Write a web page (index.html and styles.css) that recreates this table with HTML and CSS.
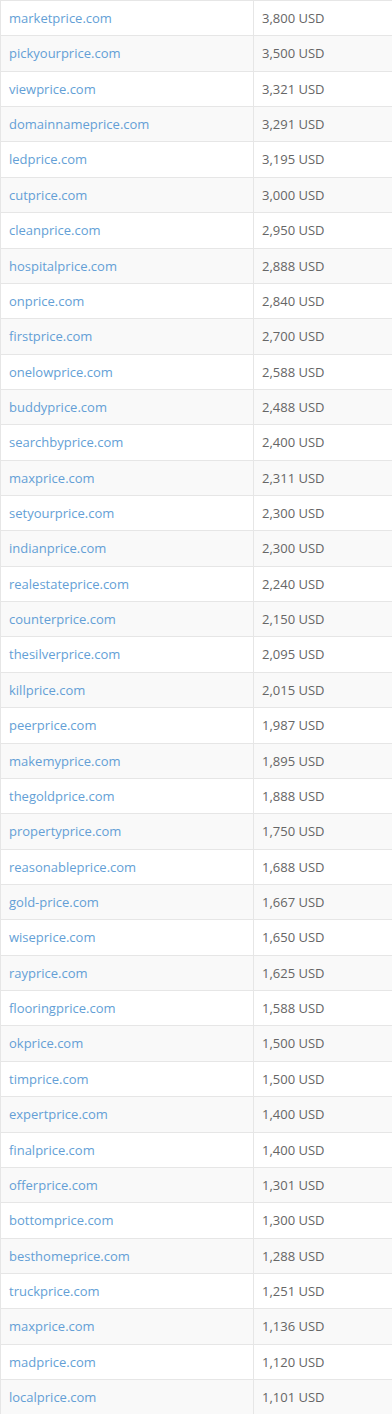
FILE: index.html
```html
<!DOCTYPE html>
<html>
<head>
<meta charset="utf-8">
<link rel="stylesheet" href="styles.css">
</head>
<body>
<table class="prices">
<tbody>
<tr><td class="domain"><a href="#">marketprice.com</a></td><td class="price">3,800 USD</td></tr>
<tr><td class="domain"><a href="#">pickyourprice.com</a></td><td class="price">3,500 USD</td></tr>
<tr><td class="domain"><a href="#">viewprice.com</a></td><td class="price">3,321 USD</td></tr>
<tr><td class="domain"><a href="#">domainnameprice.com</a></td><td class="price">3,291 USD</td></tr>
<tr><td class="domain"><a href="#">ledprice.com</a></td><td class="price">3,195 USD</td></tr>
<tr><td class="domain"><a href="#">cutprice.com</a></td><td class="price">3,000 USD</td></tr>
<tr><td class="domain"><a href="#">cleanprice.com</a></td><td class="price">2,950 USD</td></tr>
<tr><td class="domain"><a href="#">hospitalprice.com</a></td><td class="price">2,888 USD</td></tr>
<tr><td class="domain"><a href="#">onprice.com</a></td><td class="price">2,840 USD</td></tr>
<tr><td class="domain"><a href="#">firstprice.com</a></td><td class="price">2,700 USD</td></tr>
<tr><td class="domain"><a href="#">onelowprice.com</a></td><td class="price">2,588 USD</td></tr>
<tr><td class="domain"><a href="#">buddyprice.com</a></td><td class="price">2,488 USD</td></tr>
<tr><td class="domain"><a href="#">searchbyprice.com</a></td><td class="price">2,400 USD</td></tr>
<tr><td class="domain"><a href="#">maxprice.com</a></td><td class="price">2,311 USD</td></tr>
<tr><td class="domain"><a href="#">setyourprice.com</a></td><td class="price">2,300 USD</td></tr>
<tr><td class="domain"><a href="#">indianprice.com</a></td><td class="price">2,300 USD</td></tr>
<tr><td class="domain"><a href="#">realestateprice.com</a></td><td class="price">2,240 USD</td></tr>
<tr><td class="domain"><a href="#">counterprice.com</a></td><td class="price">2,150 USD</td></tr>
<tr><td class="domain"><a href="#">thesilverprice.com</a></td><td class="price">2,095 USD</td></tr>
<tr><td class="domain"><a href="#">killprice.com</a></td><td class="price">2,015 USD</td></tr>
<tr><td class="domain"><a href="#">peerprice.com</a></td><td class="price">1,987 USD</td></tr>
<tr><td class="domain"><a href="#">makemyprice.com</a></td><td class="price">1,895 USD</td></tr>
<tr><td class="domain"><a href="#">thegoldprice.com</a></td><td class="price">1,888 USD</td></tr>
<tr><td class="domain"><a href="#">propertyprice.com</a></td><td class="price">1,750 USD</td></tr>
<tr><td class="domain"><a href="#">reasonableprice.com</a></td><td class="price">1,688 USD</td></tr>
<tr><td class="domain"><a href="#">gold-price.com</a></td><td class="price">1,667 USD</td></tr>
<tr><td class="domain"><a href="#">wiseprice.com</a></td><td class="price">1,650 USD</td></tr>
<tr><td class="domain"><a href="#">rayprice.com</a></td><td class="price">1,625 USD</td></tr>
<tr><td class="domain"><a href="#">flooringprice.com</a></td><td class="price">1,588 USD</td></tr>
<tr><td class="domain"><a href="#">okprice.com</a></td><td class="price">1,500 USD</td></tr>
<tr><td class="domain"><a href="#">timprice.com</a></td><td class="price">1,500 USD</td></tr>
<tr><td class="domain"><a href="#">expertprice.com</a></td><td class="price">1,400 USD</td></tr>
<tr><td class="domain"><a href="#">finalprice.com</a></td><td class="price">1,400 USD</td></tr>
<tr><td class="domain"><a href="#">offerprice.com</a></td><td class="price">1,301 USD</td></tr>
<tr><td class="domain"><a href="#">bottomprice.com</a></td><td class="price">1,300 USD</td></tr>
<tr><td class="domain"><a href="#">besthomeprice.com</a></td><td class="price">1,288 USD</td></tr>
<tr><td class="domain"><a href="#">truckprice.com</a></td><td class="price">1,251 USD</td></tr>
<tr><td class="domain"><a href="#">maxprice.com</a></td><td class="price">1,136 USD</td></tr>
<tr><td class="domain"><a href="#">madprice.com</a></td><td class="price">1,120 USD</td></tr>
<tr><td class="domain"><a href="#">localprice.com</a></td><td class="price">1,101 USD</td></tr>
</tbody>
</table>
</body>
</html>
```

FILE: styles.css
```css
html, body {
  margin: 0;
  padding: 0;
  background: #ffffff;
}

body {
  font-family: "Open Sans", "Liberation Sans", sans-serif;
  font-size: 13px;
}

.prices {
  width: 392px;
  border-collapse: collapse;
  border-spacing: 0;
}

.prices td {
  padding: 8px 8px 8px 8px;
  line-height: 18.36px;
  border-top: 1px solid #e6e6e6;
  vertical-align: top;
  white-space: nowrap;
}

.prices tr:nth-child(even) td {
  background: #f9f9f9;
}

.prices .domain {
  width: 236px;
  border-left: 1px solid #e6e6e6;
}

.prices .price {
  border-left: 1px solid #e6e6e6;
  color: #666666;
}

.prices a {
  color: #649fd6;
  text-decoration: none;
}
```
